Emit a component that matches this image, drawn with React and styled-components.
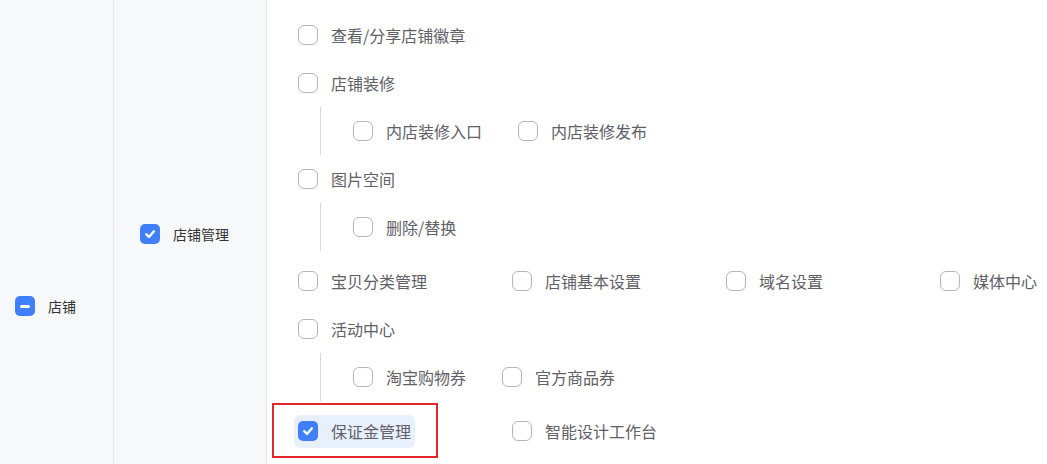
import React from "react";
import styled, { createGlobalStyle, css } from "styled-components";

const GlobalStyle = createGlobalStyle`
  html, body {
    margin: 0;
    padding: 0;
    overflow: hidden;
    background: #fff;
    font-family: "Noto Sans CJK SC", "Noto Sans", sans-serif;
  }
`;

// the second group continues below the fold, only its cells are drawn
const groups = [
  {
    label: "店铺管理",
    checked: true,
    rows: [
      { type: "row", items: ["查看/分享店铺徽章"] },
      { type: "row", items: ["店铺装修"] },
      { type: "sub", items: ["内店装修入口", "内店装修发布"] },
      { type: "row", items: ["图片空间"] },
      { type: "sub", items: ["删除/替换"] },
      { type: "grid", items: ["宝贝分类管理", "店铺基本设置", "域名设置", "媒体中心"] },
      { type: "row", items: ["活动中心"] },
      { type: "sub", items: ["淘宝购物券", "官方商品券"] },
      { type: "grid", items: ["保证金管理", "智能设计工作台"], active: "保证金管理" },
    ],
  },
  { label: "", checked: false, rows: [] },
];

const Checkbox = ({ state }) => (
  <Box state={state}>
    {state === "checked" && (
      <svg width="12" height="12" viewBox="0 0 12 12" fill="none">
        <polyline
          points="2.2,6.2 5,8.9 9.9,3.3"
          stroke="#fff"
          strokeWidth="2.3"
          strokeLinecap="round"
          strokeLinejoin="round"
        />
      </svg>
    )}
    {state === "partial" && <Dash />}
  </Box>
);

const Option = ({ label, active }) => (
  <OptionLabel active={active}>
    <Checkbox state={active ? "checked" : "empty"} />
    <OptionText>{label}</OptionText>
  </OptionLabel>
);

const App = () => (
  <>
    <GlobalStyle />
    <Page>
      <Table>
        <TopCell>
          <Checkbox state="partial" />
          <CellText>店铺</CellText>
        </TopCell>
        <Groups>
          {groups.map((group, g) => (
            <Group key={g} filler={!group.label}>
              <GroupCell>
                {group.label && (
                  <>
                    <Checkbox state={group.checked ? "checked" : "empty"} />
                    <CellText>{group.label}</CellText>
                  </>
                )}
              </GroupCell>
              <Perms>
                {group.rows.map((row, i) => {
                  if (row.type === "sub")
                    return (
                      <SubRow key={i}>
                        {row.items.map(item => (
                          <Option key={item} label={item} />
                        ))}
                      </SubRow>
                    );
                  if (row.type === "grid")
                    return (
                      <GridRow key={i}>
                        {row.items.map(item => (
                          <GridCell key={item}>
                            <Option label={item} active={row.active === item} />
                          </GridCell>
                        ))}
                      </GridRow>
                    );
                  return (
                    <Row key={i}>
                      {row.items.map(item => (
                        <Option key={item} label={item} />
                      ))}
                    </Row>
                  );
                })}
              </Perms>
            </Group>
          ))}
        </Groups>
      </Table>
    </Page>
  </>
);

export default App;

const Page = styled.div`
  height: 100vh;
  overflow: hidden;
`;

const Table = styled.div`
  display: flex;
  width: 100%;
  height: 612px;
`;

const TopCell = styled.div`
  width: 114px;
  flex-shrink: 0;
  background: #f7f8fa;
  border-right: 1px solid #e5e6eb;
  display: flex;
  align-items: center;
  padding-left: 15px;
  box-sizing: border-box;
`;

const Groups = styled.div`
  flex: 1;
  display: flex;
  flex-direction: column;
`;

const Group = styled.div`
  display: flex;
  border-bottom: 1px solid #e5e6eb;

  ${props =>
    props.filler &&
    css`
      flex: 1;
    `}
`;

const GroupCell = styled.div`
  width: 153px;
  flex-shrink: 0;
  background: #f7f8fa;
  border-right: 1px solid #e5e6eb;
  display: flex;
  align-items: center;
  padding-left: 26px;
  box-sizing: border-box;
`;

const CellText = styled.span`
  margin-left: 13px;
  font-size: 14px;
  color: #333;
`;

const Perms = styled.div`
  flex: 1;
  padding: 11px 0 12px 31px;
  display: flex;
  flex-direction: column;
`;

const Row = styled.div`
  height: 48px;
  display: flex;
  align-items: center;
`;

const SubRow = styled.div`
  height: 48px;
  display: flex;
  align-items: center;
  margin-left: 22px;
  padding-left: 32px;
  border-left: 1px solid #d9d9d9;

  & > label {
    margin-right: 36px;
  }
`;

const GridRow = styled.div`
  height: 48px;
  margin-top: 6px;
  display: grid;
  grid-template-columns: repeat(4, 214px);
  align-items: center;
`;

const GridCell = styled.div`
  display: flex;
  align-items: center;
`;

const OptionLabel = styled.label`
  position: relative;
  display: inline-flex;
  align-items: center;
  cursor: pointer;

  ${props =>
    props.active &&
    css`
      background: #e8effd;
      border-radius: 6px;
      height: 33px;
      padding: 0 4px;
      margin-left: -4px;

      &::after {
        content: "";
        position: absolute;
        top: -12px;
        bottom: -10px;
        left: -22px;
        right: -23px;
        border: 2px solid #e3262c;
        pointer-events: none;
      }
    `}
`;

const OptionText = styled.span`
  margin-left: 13px;
  font-size: 16px;
  line-height: 22px;
  color: #606066;
`;

const Box = styled.span`
  width: 20px;
  height: 20px;
  box-sizing: border-box;
  border-radius: 6px;
  flex-shrink: 0;
  display: inline-flex;
  align-items: center;
  justify-content: center;
  border: 1px solid #b4b3bf;
  background: #fff;

  ${props =>
    props.state !== "empty" &&
    css`
      border: none;
      border-radius: 5px;
      background: #3f7ffa;
    `}
`;

const Dash = styled.span`
  width: 10px;
  height: 3px;
  border-radius: 2px;
  background: #fff;
`;
